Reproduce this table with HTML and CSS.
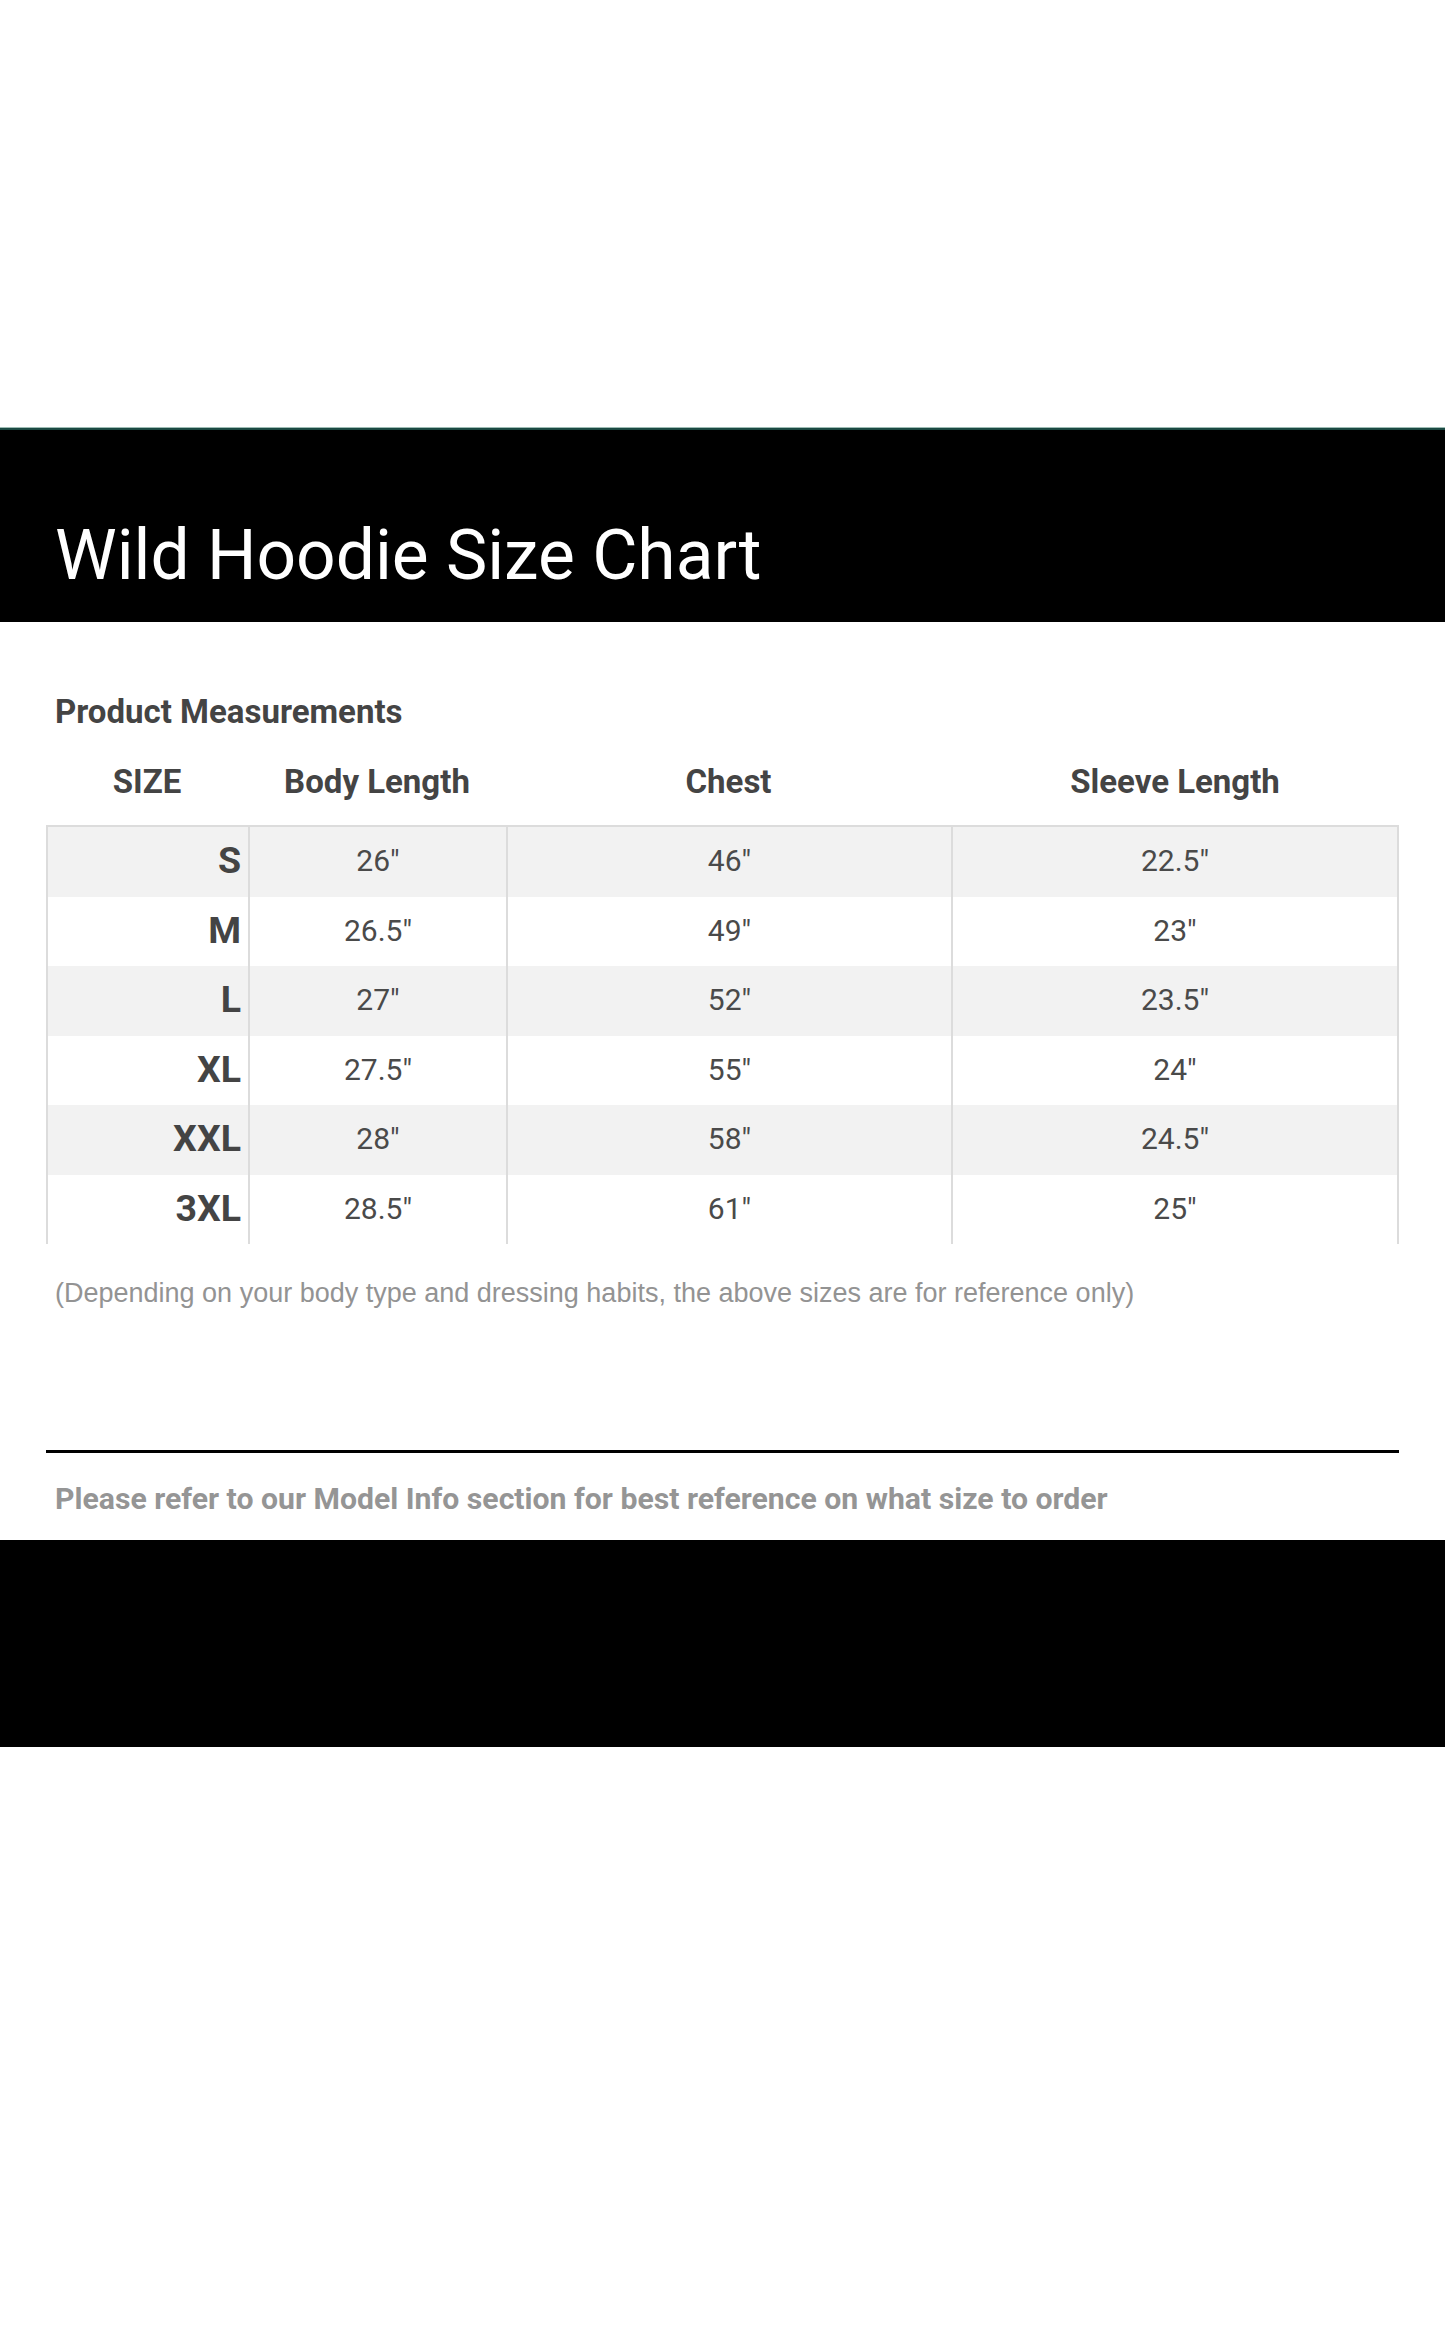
FILE: index.html
```html
<!DOCTYPE html>
<html lang="en">
<head>
<meta charset="utf-8">
<title>Wild Hoodie Size Chart</title>
<link rel="stylesheet" href="styles.css">
</head>
<body>
<div class="page">
  <header class="banner">
    <h1 class="banner-title">Wild Hoodie Size Chart</h1>
  </header>

  <section class="content">
    <h2 class="section-title">Product Measurements</h2>

    <div class="chart">
      <div class="chart-row chart-head">
        <div class="cell">SIZE</div>
        <div class="cell">Body Length</div>
        <div class="cell">Chest</div>
        <div class="cell">Sleeve Length</div>
      </div>
      <div class="chart-body">
        <div class="chart-row shade">
          <div class="cell size">S</div><div class="cell">26"</div><div class="cell">46"</div><div class="cell">22.5"</div>
        </div>
        <div class="chart-row">
          <div class="cell size">M</div><div class="cell">26.5"</div><div class="cell">49"</div><div class="cell">23"</div>
        </div>
        <div class="chart-row shade">
          <div class="cell size">L</div><div class="cell">27"</div><div class="cell">52"</div><div class="cell">23.5"</div>
        </div>
        <div class="chart-row">
          <div class="cell size">XL</div><div class="cell">27.5"</div><div class="cell">55"</div><div class="cell">24"</div>
        </div>
        <div class="chart-row shade">
          <div class="cell size">XXL</div><div class="cell">28"</div><div class="cell">58"</div><div class="cell">24.5"</div>
        </div>
        <div class="chart-row">
          <div class="cell size">3XL</div><div class="cell">28.5"</div><div class="cell">61"</div><div class="cell">25"</div>
        </div>
      </div>
    </div>

    <p class="note">(Depending on your body type and dressing habits, the above sizes are for reference only)</p>

    <hr class="divider">

    <p class="refer">Please refer to our Model Info section for best reference on what size to order</p>
  </section>

  <div class="footer-band"></div>
</div>
</body>
</html>
```

FILE: styles.css
```css
html, body {
  margin: 0;
  padding: 0;
  background: #ffffff;
}

.page {
  padding-top: 428px;
  font-family: Roboto, "Liberation Sans", Arial, sans-serif;
}

.banner {
  background: #000000;
  border-top: 2px solid #1b4a42;
  box-shadow: 0 -1px 0 #9dbcb4;
  padding: 91px 0 31px 55px;
}

.banner-title {
  margin: 0;
  font-family: Roboto, sans-serif;
  font-weight: 400;
  font-size: 69.5px;
  line-height: 70px;
  color: #ffffff;
}

.content {
  padding: 70px 46px 0 46px;
}

.section-title {
  margin: 0 0 9px 9px;
  font-size: 33px;
  line-height: 40px;
  font-weight: 700;
  color: #444444;
}

.chart {
  width: 1353px;
}

.chart-row {
  display: grid;
  grid-template-columns: 202px 258px 445px 448px;
}

.chart-head .cell {
  height: 84px;
  line-height: 82px;
  font-size: 33px;
  font-weight: 700;
  color: #444444;
  text-align: center;
}

.chart-body {
  border-top: 2px solid #dcdcdc;
}

.chart-body .chart-row {
  height: 69.5px;
}

.chart-body .chart-row.shade {
  background: #f2f2f2;
}

.chart-body .cell {
  border-left: 2px solid #dcdcdc;
  line-height: 67.5px;
  font-size: 30px;
  font-weight: 400;
  color: #4a4a4a;
  text-align: center;
}

.chart-body .cell:last-child {
  border-right: 2px solid #dcdcdc;
}

.chart-body .cell.size {
  text-align: right;
  padding-right: 7px;
  font-size: 37.5px;
  font-weight: 700;
  color: #444444;
}

.note {
  margin: 34px 0 0 9px;
  font-family: "Liberation Sans", Arial, sans-serif;
  font-size: 27px;
  line-height: 30px;
  color: #939393;
}

.divider {
  margin: 142px 0 0 0;
  width: 1353px;
  height: 0;
  border: 0;
  border-top: 3px solid #000000;
}

.refer {
  margin: 29px 0 0 9px;
  font-size: 30.2px;
  line-height: 34px;
  font-weight: 700;
  color: #959595;
}

.footer-band {
  margin-top: 24px;
  height: 207px;
  background: #000000;
}
```
